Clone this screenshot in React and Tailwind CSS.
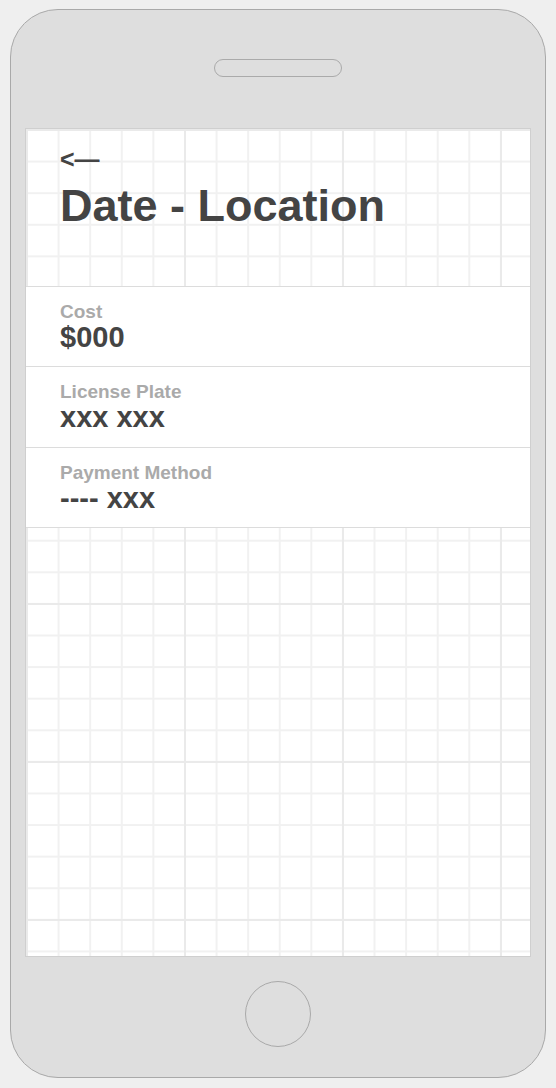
import React from "react";

const rows = [
  { label: "Cost", value: "$000", h: "h-[80px]" },
  { label: "License Plate", value: "xxx xxx", h: "h-[81px]" },
  { label: "Payment Method", value: "---- xxx", h: "h-[81px]" },
];

export default function App() {
  return (
    <div className="min-h-screen bg-[#efefef] pt-[9px] pl-[10px] font-['Liberation_Sans',Arial,sans-serif]">
      {/* Phone frame */}
      <div className="w-[536px] h-[1069px] rounded-[48px] border border-[#a9a9a9] bg-[#dedede] flex flex-col items-center">
        <div className="mt-[49px] w-[128px] h-[18px] rounded-full border border-[#aaaaaa]" />

        {/* Screen */}
        <div className="mt-[51px] w-[506px] h-[829px] border border-[#cfcfcf] bg-white bg-[linear-gradient(to_right,#eaeaea_2px,transparent_2px),linear-gradient(to_bottom,#eaeaea_2px,transparent_2px),linear-gradient(to_right,#f1f1f1_2px,transparent_2px),linear-gradient(to_bottom,#f1f1f1_2px,transparent_2px)] bg-[size:158px_158px,158px_158px,31.6px_31.6px,31.6px_31.6px] flex flex-col">
          <header className="h-[157px] pl-[34px] pt-[18px] text-[#444444]">
            <div className="text-[25px] leading-[24px] font-bold">&lt;&mdash;</div>
            <h1 className="mt-[12px] text-[45px] leading-[45px] font-bold">
              Date - Location
            </h1>
          </header>

          <ul className="bg-white">
            {rows.map((r, i) => (
              <li
                key={r.label}
                className={`${r.h} border-t border-[#dcdcdc] pl-[34px] pt-[15px] ${
                  i === rows.length - 1 ? "border-b" : ""
                }`}
              >
                <div className="text-[19px] leading-[20px] font-bold text-[#aaaaaa]">{r.label}</div>
                <div className="mt-[1px] text-[29px] leading-[28px] font-bold text-[#444444]">
                  {r.value}
                </div>
              </li>
            ))}
          </ul>
        </div>

        {/* Home button */}
        <div className="mt-[24px] w-[66px] h-[66px] rounded-full border border-[#a9a9a9]" />
      </div>
    </div>
  );
}
